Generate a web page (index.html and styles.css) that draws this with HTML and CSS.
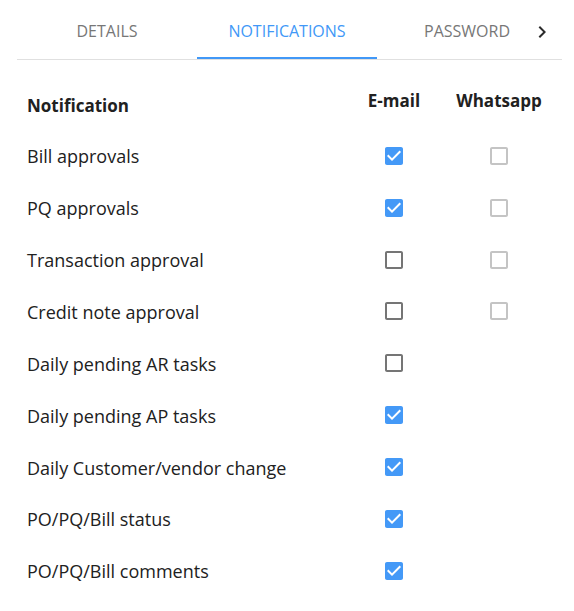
FILE: index.html
```html
<!DOCTYPE html>
<html>
<head>
<meta charset="utf-8">
<link rel="stylesheet" href="styles.css">
</head>
<body>
<div class="panel">
  <div class="tabbar">
    <div class="tabs">
      <div class="tab">DETAILS</div>
      <div class="tab active">NOTIFICATIONS</div>
      <div class="tab">PASSWORD</div>
    </div>
    <div class="scroll-btn">
      <svg viewBox="0 0 24 24" width="24" height="24"><path d="M8.59 16.59 13.17 12 8.59 7.41 10 6l6 6-6 6-1.41-1.41z" fill="#2b2b2b"/></svg>
    </div>
  </div>

  <div class="table">
    <div class="row head">
      <div class="name">Notification</div>
      <div class="col">E-mail</div>
      <div class="col">Whatsapp</div>
    </div>

    <div class="row">
      <div class="name">Bill approvals</div>
      <div class="col"><svg class="cb on" viewBox="0 0 24 24"><path d="M19 3H5c-1.11 0-2 .9-2 2v14c0 1.1.89 2 2 2h14c1.11 0 2-.9 2-2V5c0-1.1-.89-2-2-2zm-9 14l-5-5 1.410-1.41L10 14.17l7.59-7.59L19 8l-9 9z"/></svg></div>
      <div class="col"><svg class="cb dis" viewBox="0 0 24 24"><path d="M19 5v14H5V5h14m0-2H5c-1.1 0-2 .9-2 2v14c0 1.1.9 2 2 2h14c1.1 0 2-.9 2-2V5c0-1.1-.9-2-2-2z"/></svg></div>
    </div>
    <div class="row">
      <div class="name">PQ approvals</div>
      <div class="col"><svg class="cb on" viewBox="0 0 24 24"><path d="M19 3H5c-1.11 0-2 .9-2 2v14c0 1.1.89 2 2 2h14c1.11 0 2-.9 2-2V5c0-1.1-.89-2-2-2zm-9 14l-5-5 1.41-1.41L10 14.170l7.59-7.59L19 8l-9 9z"/></svg></div>
      <div class="col"><svg class="cb dis" viewBox="0 0 24 24"><path d="M19 5v14H5V5h14m0-2H5c-1.1 0-2 .9-2 2v14c0 1.1.9 2 2 2h14c1.1 0 2-.9 2-2V5c0-1.1-.9-2-2-2z"/></svg></div>
    </div>
    <div class="row">
      <div class="name">Transaction approval</div>
      <div class="col"><svg class="cb off" viewBox="0 0 24 24"><path d="M19 5v14H5V5h14m0-2H5c-1.1 0-2 .9-2 2v14c0 1.1.9 2 2 2h14c1.1 0 2-.9 2-2V5c0-1.1-.9-2-2-2z"/></svg></div>
      <div class="col"><svg class="cb dis" viewBox="0 0 24 24"><path d="M19 5v14H5V5h14m0-2H5c-1.1 0-2 .9-2 2v14c0 1.1.9 2 2 2h14c1.1 0 2-.9 2-2V5c0-1.1-.9-2-2-2z"/></svg></div>
    </div>
    <div class="row">
      <div class="name">Credit note approval</div>
      <div class="col"><svg class="cb off" viewBox="0 0 24 24"><path d="M19 5v14H5V5h14m0-2H5c-1.1 0-2 .9-2 2v14c0 1.1.9 2 2 2h14c1.1 0 2-.9 2-2V5c0-1.1-.9-2-2-2z"/></svg></div>
      <div class="col"><svg class="cb dis" viewBox="0 0 24 24"><path d="M19 5v14H5V5h14m0-2H5c-1.1 0-2 .9-2 2v14c0 1.1.9 2 2 2h14c1.1 0 2-.9 2-2V5c0-1.1-.9-2-2-2z"/></svg></div>
    </div>
    <div class="row">
      <div class="name">Daily pending AR tasks</div>
      <div class="col"><svg class="cb off" viewBox="0 0 24 24"><path d="M19 5v14H5V5h14m0-2H5c-1.1 0-2 .9-2 2v14c0 1.1.9 2 2 2h14c1.1 0 2-.9 2-2V5c0-1.1-.9-2-2-2z"/></svg></div>
      <div class="col"></div>
    </div>
    <div class="row">
      <div class="name">Daily pending AP tasks</div>
      <div class="col"><svg class="cb on" viewBox="0 0 24 24"><path d="M19 3H5c-1.11 0-2 .9-2 2v14c0 1.1.89 2 2 2h14c1.11 0 2-.9 2-2V5c0-1.1-.89-2-2-2zm-9 14l-5-5 1.41-1.41L10 14.17l7.59-7.59L19 8l-9 9z"/></svg></div>
      <div class="col"></div>
    </div>
    <div class="row">
      <div class="name">Daily Customer/vendor change</div>
      <div class="col"><svg class="cb on" viewBox="0 0 24 24"><path d="M19 3H5c-1.11 0-2 .9-2 2v14c0 1.1.89 2 2 2h14c1.11 0 2-.9 2-2V5c0-1.1-.89-2-2-2zm-9 14l-5-5 1.41-1.41L10 14.17l7.59-7.59L19 8l-9 9z"/></svg></div>
      <div class="col"></div>
    </div>
    <div class="row">
      <div class="name">PO/PQ/Bill status</div>
      <div class="col"><svg class="cb on" viewBox="0 0 24 24"><path d="M19 3H5c-1.11 0-2 .9-2 2v14c0 1.1.89 2 2 2h14c1.11 0 2-.9 2-2V5c0-1.1-.89-2-2-2zm-9 14l-5-5 1.41-1.41L10 14.17l7.59-7.59L19 8l-9 9z"/></svg></div>
      <div class="col"></div>
    </div>
    <div class="row">
      <div class="name">PO/PQ/Bill comments</div>
      <div class="col"><svg class="cb on" viewBox="0 0 24 24"><path d="M19 3H5c-1.11 0-2 .9-2 2v14c0 1.1.89 2 2 2h14c1.11 0 2-.9 2-2V5c0-1.1-.89-2-2-2zm-9 14l-5-5 1.41-1.41L10 14.17l7.59-7.59L19 8l-9 9z"/></svg></div>
      <div class="col"></div>
    </div>
  </div>
</div>
</body>
</html>
```
FILE: styles.css
```css
* { box-sizing: border-box; }
html, body { margin: 0; padding: 0; background: #fff; }
body {
  font-family: "Open Sans", "Noto Sans", sans-serif;
  color: #212121;
}
.panel {
  width: 545px;
  margin-left: 17px;
}
.tabbar {
  display: flex;
  height: 60px;
  border-bottom: 1px solid #e0e0e0;
}
.tabs {
  flex: 1;
  display: flex;
  overflow: hidden;
}
.tab {
  flex: 0 0 180px;
  height: 59px;
  display: flex;
  align-items: center;
  justify-content: center;
  padding-top: 3px;
  font-size: 16px;
  color: #777;
  position: relative;
}
.tab.active { color: #4198f7; }
.tab.active::after {
  content: "";
  position: absolute;
  left: 0; right: 0; bottom: 0;
  height: 2px;
  background: #4198f7;
}
.scroll-btn {
  flex: 0 0 40px;
  display: flex;
  align-items: center;
  justify-content: center;
  padding-top: 4px;
}
.table {
  margin-top: 17px;
  padding: 0 10px;
}
.row {
  display: grid;
  grid-template-columns: 1fr 104px 106px;
  height: 51.875px;
  align-items: center;
  font-size: 18px;
}
.row .name { padding-top: 3px; }
.row .col {
  display: flex;
  justify-content: center;
}
.head { font-size: 17px; font-weight: 700; }
.head .name { padding-top: 5px; }
.head .col { padding-bottom: 5px; }
.cb {
  width: 24px;
  height: 24px;
  display: block;
  transform: translateY(1px);
}
.cb.on { fill: #4499f7; }
.cb.off { fill: #757575; }
.cb.dis { fill: #c4c4c4; }
```
